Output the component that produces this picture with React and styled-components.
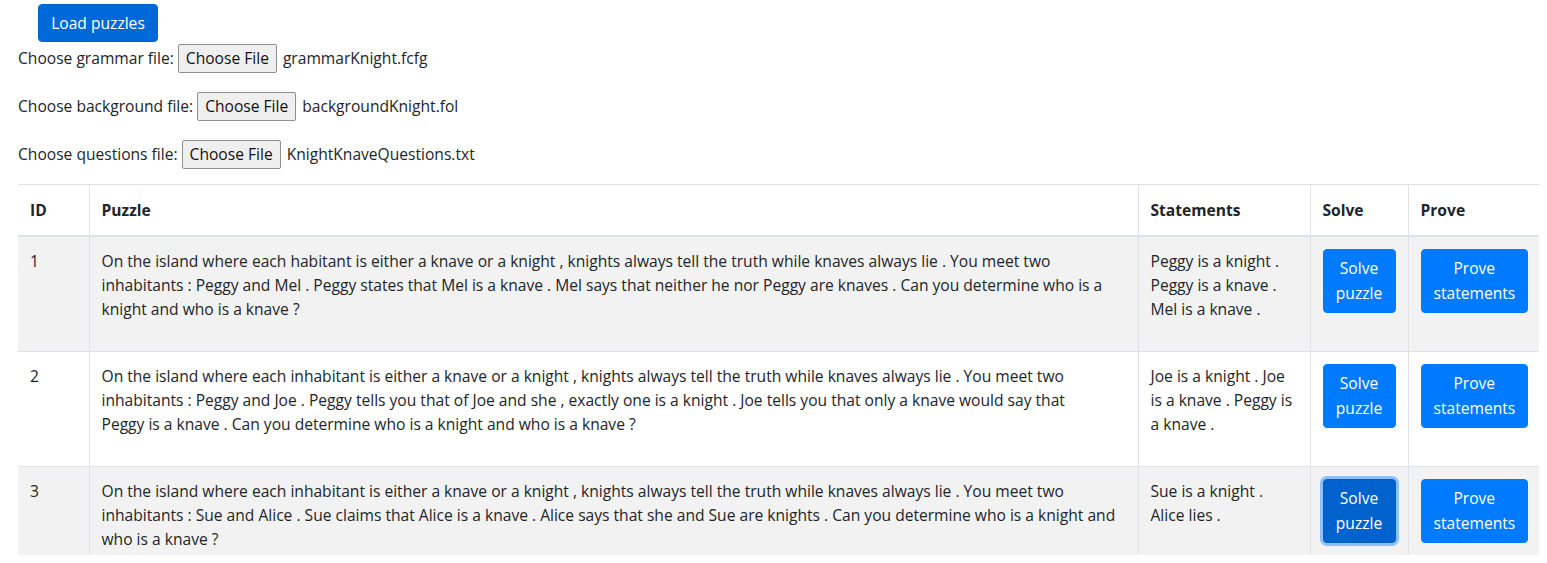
import React from 'react';
import styled, { createGlobalStyle, css } from 'styled-components';

const GlobalStyle = createGlobalStyle`
  body {
    margin: 0;
    font-family: "Open Sans", "Noto Sans", sans-serif;
    font-size: 15.6px;
    line-height: 24px;
    color: #212529;
    background: #fff;
  }
`;

const Page = styled.div`
  padding: 4px 8px 0 18px;
`;

const PrimaryButton = styled.button`
  display: inline-block;
  font: inherit;
  font-size: 15.6px;
  line-height: 25px;
  color: #fff;
  text-align: center;
  background: #007bff;
  border: 1px solid #007bff;
  border-radius: 4px;
  padding: 6px 12px;
  cursor: pointer;
  ${p => p.$hover && css`
    background: #0069d9;
    border-color: #0062cc;
  `}
  ${p => p.$focus && css`
    background: #0062cc;
    border-color: #005cbf;
    box-shadow: 0 0 0 3px rgba(38, 143, 255, 0.5);
  `}
`;

const LoadButton = styled(PrimaryButton)`
  margin-left: 20px;
  height: 38px;
  width: 120px;
  padding: 0;
`;

const FileForm = styled.div`
  display: flex;
  flex-direction: column;
  gap: 16px;
  margin-bottom: 14px;
`;

const FileRow = styled.div`
  display: flex;
  align-items: center;
  height: 32px;
`;

const FileButton = styled.span`
  display: inline-flex;
  align-items: center;
  justify-content: center;
  height: 29px;
  box-sizing: border-box;
  margin: 0 6px 0 4px;
  padding: 0 7px;
  background: #efefef;
  border: 1px solid #8f8f8f;
  border-radius: 2px;
  color: #111;
`;

const TableWrap = styled.div`
  height: 371px;
  overflow: hidden;
`;

const Table = styled.table`
  table-layout: fixed;
  width: 1522px;
  border-collapse: collapse;
`;

const Th = styled.th`
  text-align: left;
  vertical-align: bottom;
  font-weight: 700;
  padding: 13px 12px;
  border-top: 1px solid #dee2e6;
  border-bottom: 2px solid #dee2e6;
  & + & {
    border-left: 1px solid #dee2e6;
  }
`;

const Row = styled.tr`
  background: ${p => (p.$striped ? '#f2f2f2' : '#fff')};
`;

const Td = styled.td`
  vertical-align: top;
  padding: 12px 12px 30px;
  border-top: 1px solid #dee2e6;
  white-space: nowrap;
  & + & {
    border-left: 1px solid #dee2e6;
  }
`;

const CellButton = styled(PrimaryButton)`
  width: 100%;
  white-space: normal;
`;

const puzzles = [
  {
    id: 1,
    text: [
      'On the island where each habitant is either a knave or a knight , knights always tell the truth while knaves always lie . You meet two',
      'inhabitants : Peggy and Mel . Peggy states that Mel is a knave . Mel says that neither he nor Peggy are knaves . Can you determine who is a',
      'knight and who is a knave ?'
    ],
    statements: ['Peggy is a knight .', 'Peggy is a knave .', 'Mel is a knave .']
  },
  {
    id: 2,
    text: [
      'On the island where each inhabitant is either a knave or a knight , knights always tell the truth while knaves always lie . You meet two',
      'inhabitants : Peggy and Joe . Peggy tells you that of Joe and she , exactly one is a knight . Joe tells you that only a knave would say that',
      'Peggy is a knave . Can you determine who is a knight and who is a knave ?'
    ],
    statements: ['Joe is a knight . Joe', 'is a knave . Peggy is', 'a knave .']
  },
  {
    id: 3,
    text: [
      'On the island where each inhabitant is either a knave or a knight , knights always tell the truth while knaves always lie . You meet two',
      'inhabitants : Sue and Alice . Sue claims that Alice is a knave . Alice says that she and Sue are knights . Can you determine who is a knight and',
      'who is a knave ?'
    ],
    statements: ['Sue is a knight .', 'Alice lies .'],
    focused: true
  }
];

const Lines = ({ lines }) => lines.map((line, i) => (
  <React.Fragment key={i}>
    {i > 0 && <br />}
    {line}
  </React.Fragment>
));

const files = [
  ['Choose grammar file:', 'grammarKnight.fcfg'],
  ['Choose background file:', 'backgroundKnight.fol'],
  ['Choose questions file:', 'KnightKnaveQuestions.txt']
];

export default function App() {
  return (
    <Page>
      <GlobalStyle />
      <LoadButton $hover>Load puzzles</LoadButton>
      <FileForm>
        {files.map(([label, name]) => (
          <FileRow key={label}>
            {label}
            <FileButton>Choose File</FileButton>
            {name}
          </FileRow>
        ))}
      </FileForm>
      <TableWrap>
        <Table>
          <colgroup>
            <col style={{ width: 71 }} />
            <col style={{ width: 1049 }} />
            <col style={{ width: 172 }} />
            <col style={{ width: 98 }} />
            <col style={{ width: 132 }} />
          </colgroup>
          <thead>
            <tr>
              <Th>ID</Th>
              <Th>Puzzle</Th>
              <Th>Statements</Th>
              <Th>Solve</Th>
              <Th>Prove</Th>
            </tr>
          </thead>
          <tbody>
            {puzzles.map((p, i) => (
              <Row key={p.id} $striped={i % 2 === 0}>
                <Td>{p.id}</Td>
                <Td><Lines lines={p.text} /></Td>
                <Td><Lines lines={p.statements} /></Td>
                <Td><CellButton $focus={p.focused}>Solve puzzle</CellButton></Td>
                <Td><CellButton>Prove statements</CellButton></Td>
              </Row>
            ))}
          </tbody>
        </Table>
      </TableWrap>
    </Page>
  );
}
